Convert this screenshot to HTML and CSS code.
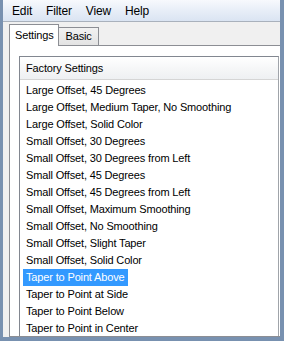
FILE: index.html
```html
<!DOCTYPE html>
<html lang="en">
<head>
    <meta charset="UTF-8">
    <title>Settings</title>
    <link rel="stylesheet" href="styles.css">
</head>
<body>
    <div class="window">
        <!-- Barra de menú -->
        <div class="menubar">
            <span class="menu-item">Edit</span>
            <span class="menu-item">Filter</span>
            <span class="menu-item">View</span>
            <span class="menu-item">Help</span>
        </div>

        <div class="client">
            <!-- Pestañas -->
            <div class="tabs">
                <div class="tab active">Settings</div>
                <div class="tab">Basic</div>
            </div>

            <div class="panel">
                <div class="listbox">
                    <div class="list-head">Factory Settings</div>
                    <ul class="items">
                        <li><span>Large Offset, 45 Degrees</span></li>
                        <li><span>Large Offset, Medium Taper, No Smoothing</span></li>
                        <li><span>Large Offset, Solid Color</span></li>
                        <li><span>Small Offset, 30 Degrees</span></li>
                        <li><span>Small Offset, 30 Degrees from Left</span></li>
                        <li><span>Small Offset, 45 Degrees</span></li>
                        <li><span>Small Offset, 45 Degrees from Left</span></li>
                        <li><span>Small Offset, Maximum Smoothing</span></li>
                        <li><span>Small Offset, No Smoothing</span></li>
                        <li><span>Small Offset, Slight Taper</span></li>
                        <li><span>Small Offset, Solid Color</span></li>
                        <li class="selected"><span>Taper to Point Above</span></li>
                        <li><span>Taper to Point at Side</span></li>
                        <li><span>Taper to Point Below</span></li>
                        <li><span>Taper to Point in Center</span></li>
                    </ul>
                </div>
            </div>
        </div>
    </div>
</body>
</html>
```

FILE: styles.css
```css
html, body {
    margin: 0;
    height: 100%;
    overflow: hidden;
}

body {
    font-family: "Liberation Sans", Arial, sans-serif;
    font-size: 11px;
    letter-spacing: -0.15px;
    color: #000;
    background-color: #7891b0; /* borde azul de la ventana */
}

.window {
    box-sizing: border-box;
    height: 341px;
    padding: 0 4px 4px 3px;
    display: flex;
    flex-direction: column;
}

/* Barra de menú */
.menubar {
    height: 21px;
    border-bottom: 1px solid #a9b1bc;
    background: linear-gradient(#f7f9fd, #e9eff8 45%, #dae4f2);
    display: flex;
    align-items: center;
    padding-left: 2px;
    font-size: 12px;
}

.menu-item {
    padding: 0 7px;
}

.client {
    flex: 1;
    min-height: 0;
    background-color: #f0f0f0;
    display: flex;
    flex-direction: column;
    padding-left: 6px;
}

/* Pestañas */
.tabs {
    height: 23px;
    display: flex;
    align-items: flex-end;
}

.tab {
    box-sizing: border-box;
    height: 18px;
    padding: 0 6px 0 7px;
    line-height: 17px;
    border: 1px solid #8c8e94;
    border-bottom: none;
    border-left: none;
    background: linear-gradient(#f2f2f2, #e3e3e3);
}

.tab.active {
    position: relative;
    z-index: 1;
    height: 22px;
    margin-bottom: -1px;
    padding: 0 4px 0 5px;
    line-height: 20px;
    border-left: 1px solid #8c8e94;
    background: #fff;
}

.panel {
    flex: 1;
    min-height: 0;
    overflow: hidden;
    background-color: #fff;
    border-top: 1px solid #8c8e94;
    border-left: 1px solid #8c8e94;
    border-bottom: 1px solid #8c8e94;
    padding: 10px 0 0 9px;
}

.listbox {
    border: 1px solid #828790;
    border-right-color: #a0a4aa;
    margin-right: 1px;
    height: 100%;
}

.list-head {
    height: 22px;
    line-height: 22px;
    padding-left: 6px;
    border-bottom: 1px solid #d5d5d5;
    background: linear-gradient(#ffffff, #f6f7f8 50%, #eef0f2);
}

.items {
    list-style: none;
    margin: 0;
    padding: 2px 0 0 0;
}

.items li {
    height: 17px;
    line-height: 17px;
    padding-left: 3px;
    white-space: nowrap;
}

.items li span {
    display: inline-block;
    padding: 0 3px;
}

.items li.selected span {
    background-color: #3399ff;
    color: #fff;
}
```
